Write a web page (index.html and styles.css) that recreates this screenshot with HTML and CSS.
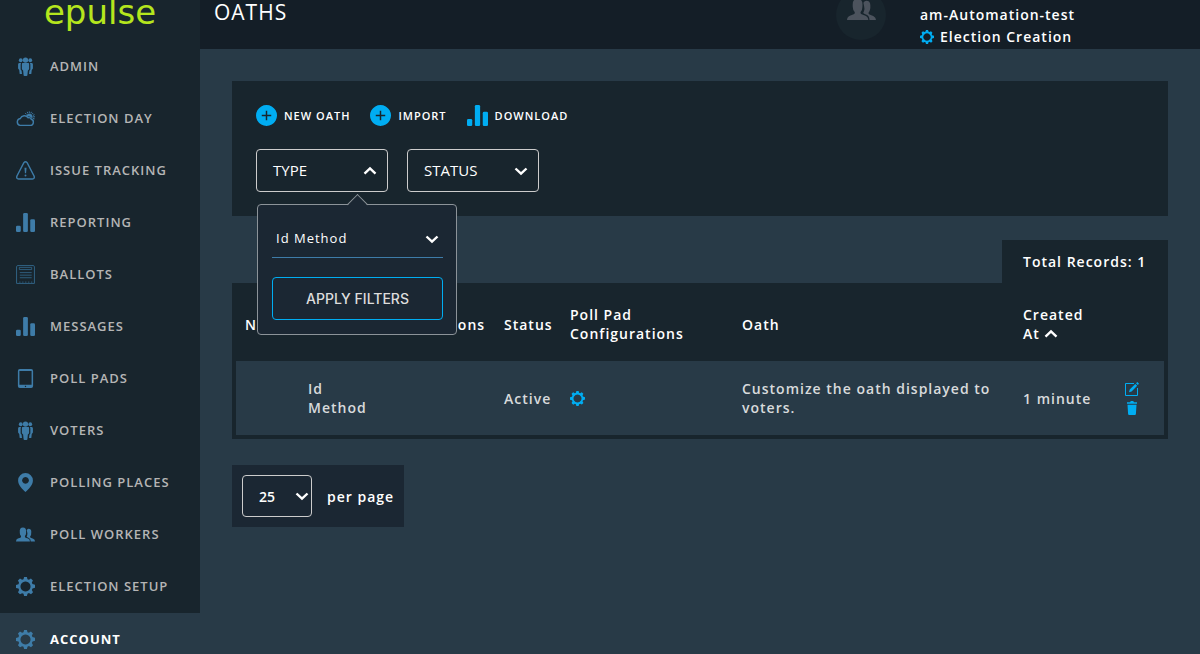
FILE: index.html
```html
<!DOCTYPE html>
<html lang="en">
<head>
<meta charset="utf-8">
<title>Oaths</title>
<link rel="stylesheet" href="styles.css">
</head>
<body>
<svg class="sprite" aria-hidden="true">
  <symbol id="i-people" viewBox="0 0 20 20">
    <circle cx="10" cy="3.2" r="2.8"/><circle cx="5" cy="3.4" r="2"/><circle cx="15" cy="3.4" r="2"/>
    <path d="M6.2 7.2q0-.8.8-.8h6q.8 0 .8.8v5.6l-1.3 1.4-.5 5q-.1.8-1 .8H9q-.9 0-1-.8l-.5-5-1.3-1.4z"/>
    <path d="M5.3 6.2H3.4Q2 6.4 2.2 8v4l1.2 1.6.5 4.2h2.4l-.4-3.4-1-1.2V8z"/>
    <path d="M14.700 6.200h1.900q1.400.2 1.200 1.800v4l-1.200 1.600-.5 4.200h-2.400l.4-3.400 1-1.200V8z"/>
  </symbol>
  <symbol id="i-weather" viewBox="0 0 20 20">
    <path d="M4 17.200h11.200a3.200 3.200 0 0 0 1-6.200 2.700 2.700 0 0 0-3.400-1.800A4.700 4.700 0 0 0 4.500 10 3.700 3.700 0 0 0 4 17.200z" fill="none" stroke="currentColor" stroke-width="1.500"/>
    <path d="M10.800 7.600a3.400 3.400 0 1 1 6.200 2.600 4 4 0 0 0-3-2.300 6 6 0 0 0-3.200-.3z"/>
    <path d="M14 2.500v2M18 4.300l-1.400 1.400M20 8.200h-2M18.800 12l-1.500-1.200M9.700 4.300l1.400 1.400M11.800 3l.7 1.600M16.300 3l-.7 1.600M19.500 6l-1.700.8M19.600 10.400l-1.700-.7" fill="none" stroke="currentColor"/>
  </symbol>
  <symbol id="i-warning" viewBox="0 0 20 20">
    <path d="M8.300 1.700q1.700-1.900 3.400 0L19 15.800q1 2.700-1.800 3.200H2.800Q0 18.500 1 15.800z" fill="none" stroke="currentColor" stroke-width="1.500"/>
    <path d="M8.900 7h2.200l-.5 6H9.400z"/><circle cx="10" cy="15.200" r="1"/>
  </symbol>
  <symbol id="i-bars" viewBox="0 0 20 20">
    <rect x="0" y="13.300" width="5" height="6.700" rx="1.300"/><rect x="7.500" y="0" width="5" height="20" rx="1.300"/><rect x="15" y="6.500" width="5" height="13.500" rx="1.300"/>
  </symbol>
  <symbol id="i-ballot" viewBox="0 0 20 20">
    <path d="M2 .6h16q1.400 0 1.400 1.400v17.400H.6V2Q.6.6 2 .6z" fill="none" stroke="currentColor"/>
    <path d="M3.500 2.500h13v2.300h-13zM4 8h12.500M4 10.700h12.500M4 13.400h12.500" fill="none" stroke="currentColor" stroke-width=".9"/>
    <path d="M3.500 18h14" fill="none" stroke="currentColor" stroke-dasharray="1.200 1.900"/>
  </symbol>
  <symbol id="i-tablet" viewBox="0 0 20 20">
    <path fill-rule="evenodd" d="M4 0h12q2 0 2 2v16q0 2-2 2H4q-2 0-2-2V2q0-2 2-2zM3.600 2v14.500h12.800V2zM10 17.600a.7.7 0 1 0 .01 0z"/>
  </symbol>
  <symbol id="i-pin" viewBox="0 0 20 20">
    <path fill-rule="evenodd" d="M10 0a7.800 7.800 0 0 1 7.800 7.800C17.800 13 13 17 10 20 7 17 2.200 13 2.200 7.800A7.800 7.800 0 0 1 10 0zM10 4.200a3.600 3.600 0 1 0 .01 0z"/>
  </symbol>
  <symbol id="i-users" viewBox="0 0 20 20">
    <path d="M0 17.300q0-2.200 2-3l2.600-1q1-.5.700-1.600Q4 10.500 4 8.500 3.700 5 4.500 4q1-1.500 2.800-1.500T10.100 4q.8 1 .5 4.500 0 2-1.200 3.200-.3 1.100.700 1.600l2.600 1q2 .8 2 3z"/>
    <path d="M11.300 5.400Q12.200 4 13.300 4q2.700 0 2.800 3 .2 3.500-1.200 5-.3 1 .6 1.400l2.600 1q1.900.8 1.900 2.900h-4.500q0-2.600-2-3.600l-2-1q-.6-.6.200-1.500.600-2 .1-3.500z"/>
  </symbol>
  <symbol id="i-gear" viewBox="0 0 20 20">
    <path fill-rule="evenodd" d="M8.500 0h3l.6 2.300 1.500.6 2.100-1.200 2.100 2.100-1.100 2.100.6 1.500 2.700.8v3.200l-2.600.8-.7 1.500 1.200 2.300-2.100 2.100-2.200-1.200-1.500.6-.6 2.500h-3l-.6-2.400-1.500-.6-2.200 1.200L2.100 16l1.200-2.300-.7-1.500L0 11.500V8.300l2.600-.8.600-1.500-1.100-2.200 2.100-2.100 2.200 1.200 1.500-.6zM10 4.700a5.300 5.300 0 1 0 .01 0z"/>
  </symbol>
  <symbol id="i-plus" viewBox="0 0 20 20">
    <path fill-rule="evenodd" d="M10 0a10 10 0 1 0 .01 0zM9.300 5.500h1.400v3.800h3.800v1.400h-3.800v3.800H9.300v-3.800H5.500V9.300h3.800z"/>
  </symbol>
  <symbol id="i-down" viewBox="0 0 14 14">
    <path d="M1.500 4.500 7 9.700l5.500-5.200" fill="none" stroke="currentColor" stroke-width="2.400"/>
  </symbol>
  <symbol id="i-up" viewBox="0 0 14 14">
    <path d="M1.500 9.700 7 4.500l5.500 5.200" fill="none" stroke="currentColor" stroke-width="2.400"/>
  </symbol>
  <symbol id="i-edit" viewBox="0 0 14 14">
    <path d="M9 1.500H.5v12h12V6" fill="none" stroke="currentColor"/>
    <path d="M4 10.300l.7-2.800 5.600-5.600 1.900 1.900-5.600 5.700zM11 1.300 12.300 0 14 1.700 12.800 3z"/>
  </symbol>
  <symbol id="i-trash" viewBox="0 0 14 14">
    <path d="M2 1.300h3l.8-1.300h2.400L9 1.300h3v1.500H2zM2.500 3.700h9l-.6 9.300q-.1 1-1 1H4.100q-.9 0-1-1z"/>
  </symbol>
</svg>

<div class="app">
  <aside class="sidebar">
    <a class="brand" href="#">epulse</a>
    <nav class="menu">
      <a href="#"><svg><use href="#i-people"/></svg>ADMIN</a>
      <a href="#"><svg><use href="#i-weather"/></svg>ELECTION DAY</a>
      <a href="#"><svg><use href="#i-warning"/></svg>ISSUE TRACKING</a>
      <a href="#"><svg><use href="#i-bars"/></svg>REPORTING</a>
      <a href="#"><svg class="faint"><use href="#i-ballot"/></svg>BALLOTS</a>
      <a href="#"><svg><use href="#i-bars"/></svg>MESSAGES</a>
      <a href="#"><svg><use href="#i-tablet"/></svg>POLL PADS</a>
      <a href="#"><svg><use href="#i-people"/></svg>VOTERS</a>
      <a href="#"><svg><use href="#i-pin"/></svg>POLLING PLACES</a>
      <a href="#"><svg><use href="#i-users"/></svg>POLL WORKERS</a>
      <a href="#"><svg><use href="#i-gear"/></svg>ELECTION SETUP</a>
      <a class="active" href="#"><svg><use href="#i-gear"/></svg>ACCOUNT</a>
    </nav>
  </aside>

  <div class="page">
    <header class="topbar">
      <h1>OATHS</h1>
      <div class="account">
        <div class="avatar"><svg><use href="#i-users"/></svg></div>
        <div class="who">
          <span>am-Automation-test</span>
          <a href="#"><svg><use href="#i-gear"/></svg>Election Creation</a>
        </div>
      </div>
    </header>

    <main class="content">
      <section class="toolbar">
        <div class="actions">
          <button type="button"><svg><use href="#i-plus"/></svg>NEW OATH</button>
          <button type="button"><svg><use href="#i-plus"/></svg>IMPORT</button>
          <button type="button"><svg><use href="#i-bars"/></svg>DOWNLOAD</button>
        </div>
        <div class="filters">
          <div class="filter">
            <button class="filter-toggle" type="button" aria-expanded="true">TYPE<svg><use href="#i-up"/></svg></button>
            <form class="popover">
              <div class="select line">
                <select aria-label="Type"><option>Id Method</option></select>
                <svg><use href="#i-down"/></svg>
              </div>
              <button class="apply" type="button">APPLY FILTERS</button>
            </form>
          </div>
          <div class="filter">
            <button class="filter-toggle" type="button" aria-expanded="false">STATUS<svg><use href="#i-down"/></svg></button>
          </div>
        </div>
      </section>

      <section class="records">
        <div class="total">Total Records: 1</div>
        <div class="table-box">
          <table>
            <colgroup><col class="c-name"><col class="c-type"><col class="c-where"><col class="c-status"><col class="c-config"><col><col class="c-created"><col class="c-tools"></colgroup>
            <thead>
              <tr><th>Name</th><th>Type</th><th>Jurisdictions</th><th>Status</th><th>Poll Pad Configurations</th><th>Oath</th><th>Created<br>At <svg class="sort"><use href="#i-up"/></svg></th><th></th></tr>
            </thead>
            <tbody>
              <tr>
                <td></td><td>Id Method</td><td></td><td>Active</td>
                <td><a class="config" href="#" aria-label="Configure"><svg><use href="#i-gear"/></svg></a></td>
                <td>Customize the oath displayed to voters.</td>
                <td>1 minute</td>
                <td><div class="tools"><button type="button" aria-label="Edit"><svg><use href="#i-edit"/></svg></button><button type="button" aria-label="Delete"><svg><use href="#i-trash"/></svg></button></div></td>
              </tr>
            </tbody>
          </table>
        </div>
      </section>

      <div class="pager">
        <div class="select boxed">
          <select id="per-page"><option>25</option></select>
          <svg><use href="#i-down"/></svg>
        </div>
        <label for="per-page">per page</label>
      </div>
    </main>
  </div>
</div>
</body>
</html>
```
FILE: styles.css
```css
* { box-sizing: border-box; }

body {
  margin: 0;
  height: 100vh;
  overflow: hidden;
  background: #283a47;
  color: #fff;
  font: 600 14px/19px "Open Sans", "Noto Sans", sans-serif;
  letter-spacing: 1px;
}

svg { fill: currentColor; flex: none; display: block; }
.sprite { position: absolute; width: 0; height: 0; }
a { color: inherit; text-decoration: none; }
button, select {
  margin: 0;
  padding: 0;
  border: 0;
  background: none;
  color: inherit;
  font: inherit;
  letter-spacing: inherit;
}

.app { display: flex; min-height: 100vh; }

.sidebar { width: 200px; flex: none; background: #18252d; }
.brand {
  display: block;
  height: 40px;
  color: #b5e61d;
  font: 400 34px/24px "DejaVu Sans", sans-serif;
  letter-spacing: normal;
  text-align: center;
}
.menu { display: flex; flex-direction: column; }
.menu a {
  display: flex;
  align-items: center;
  gap: 15px;
  height: 52px;
  padding-left: 16px;
  color: #b5b5b5;
  font-size: 13px;
}
.menu svg { width: 19px; height: 19px; color: #3e7ca8; }
.menu .faint { color: #316587; }
.menu .active { margin-top: 1px; background: #283a47; color: #fff; font-weight: 700; }

.page { flex: 1; min-width: 0; }
.topbar {
  display: flex;
  justify-content: space-between;
  height: 49px;
  padding-left: 14px;
  background: #141e27;
}
h1 { margin: 0; font-size: 21px; line-height: 24px; font-weight: 400; }
.account { display: flex; width: 364px; gap: 34px; }
.avatar {
  display: flex;
  justify-content: center;
  align-items: center;
  width: 50px;
  height: 50px;
  margin-top: -10px;
  border-radius: 50%;
  background: #18252d;
  color: #4c535d;
}
.avatar svg { width: 29px; height: 29px; margin-bottom: 12px; }
.who { padding-top: 4px; line-height: 22px; }
.who a { display: flex; align-items: center; gap: 6px; }
.who svg { width: 14px; height: 14px; color: #00adf2; }

.content { padding: 32px; }
.toolbar { padding: 24px; background: #18252d; }
.actions { display: flex; gap: 20px; font-size: 11px; line-height: 21px; }
.actions button { display: flex; align-items: center; gap: 7px; }
.actions svg { width: 21px; height: 21px; color: #00adf2; }
.filters { display: flex; gap: 19px; margin-top: 23px; }
.filter { position: relative; }
.filter-toggle {
  display: flex;
  align-items: center;
  justify-content: space-between;
  width: 132px;
  height: 43px;
  padding: 0 10px 0 16px;
  border: 1px solid #ccc;
  border-radius: 4px;
  font-size: 15px;
  font-weight: 400;
  letter-spacing: normal;
}
.filter-toggle svg, .select svg, .sort { width: 14px; height: 14px; }

.popover {
  position: absolute;
  z-index: 1;
  top: 55px;
  left: 1px;
  width: 200px;
  padding: 14px 13px 14px 14px;
  border: 1px solid #8c9399;
  border-radius: 4px;
  background: #1b2733;
}
.popover::before {
  content: "";
  position: absolute;
  top: -8px;
  left: 92px;
  width: 14px;
  height: 14px;
  border: 1px solid #8c9399;
  border-width: 1px 0 0 1px;
  background: linear-gradient(135deg, #1b2733 50%, transparent 50%);
  transform: rotate(45deg);
}
.select { display: grid; align-items: center; }
.select > * { grid-area: 1 / 1; }
.select select { width: 100%; appearance: none; }
.select svg { justify-self: end; pointer-events: none; }
.line select {
  height: 39px;
  padding-left: 4px;
  border-bottom: 1px solid #3e7ca8;
  font-size: 13px;
  font-weight: 400;
}
.line svg { margin-right: 4px; }
.apply {
  width: 100%;
  height: 43px;
  margin-top: 19px;
  border: 1px solid #00adf2;
  border-radius: 4px;
  color: #ddd;
  font: 500 14px "Inter", sans-serif;
  letter-spacing: normal;
}

.records { margin-top: 24px; }
.total {
  width: 166px;
  height: 43px;
  margin-left: auto;
  padding-left: 21px;
  background: #18252d;
  line-height: 43px;
}
.table-box { padding: 0 4px 4px; background: #18252d; }
table { width: 100%; table-layout: fixed; border-collapse: collapse; }
.c-name { width: 63px; }
.c-type { width: 81px; }
.c-where { width: 115px; }
.c-status { width: 66px; }
.c-config { width: 172px; }
.c-created { width: 102px; }
.c-tools { width: 48px; }
th, td { padding: 0 9px; text-align: left; font-weight: 600; }
th { height: 78px; padding-top: 4px; }
td { height: 74px; background: #283a47; color: #d8dadc; }
.sort { display: inline-block; vertical-align: -2px; }
.config { display: block; color: #00adf2; }
.config svg { width: 15px; height: 15px; }
.tools { display: flex; flex-direction: column; gap: 5px; }
.tools button { width: 14px; color: #00adf2; }
.tools svg { width: 14px; height: 14px; }

.pager {
  display: flex;
  align-items: center;
  gap: 15px;
  width: max-content;
  margin-top: 26px;
  padding: 10px;
  background: #1b2733;
  white-space: nowrap;
}
.boxed { width: 70px; }
.boxed select {
  height: 42px;
  padding-left: 16px;
  border: 1px solid #ccc;
  border-radius: 4px;
  letter-spacing: normal;
}
.boxed svg { margin-right: 3px; }
```
